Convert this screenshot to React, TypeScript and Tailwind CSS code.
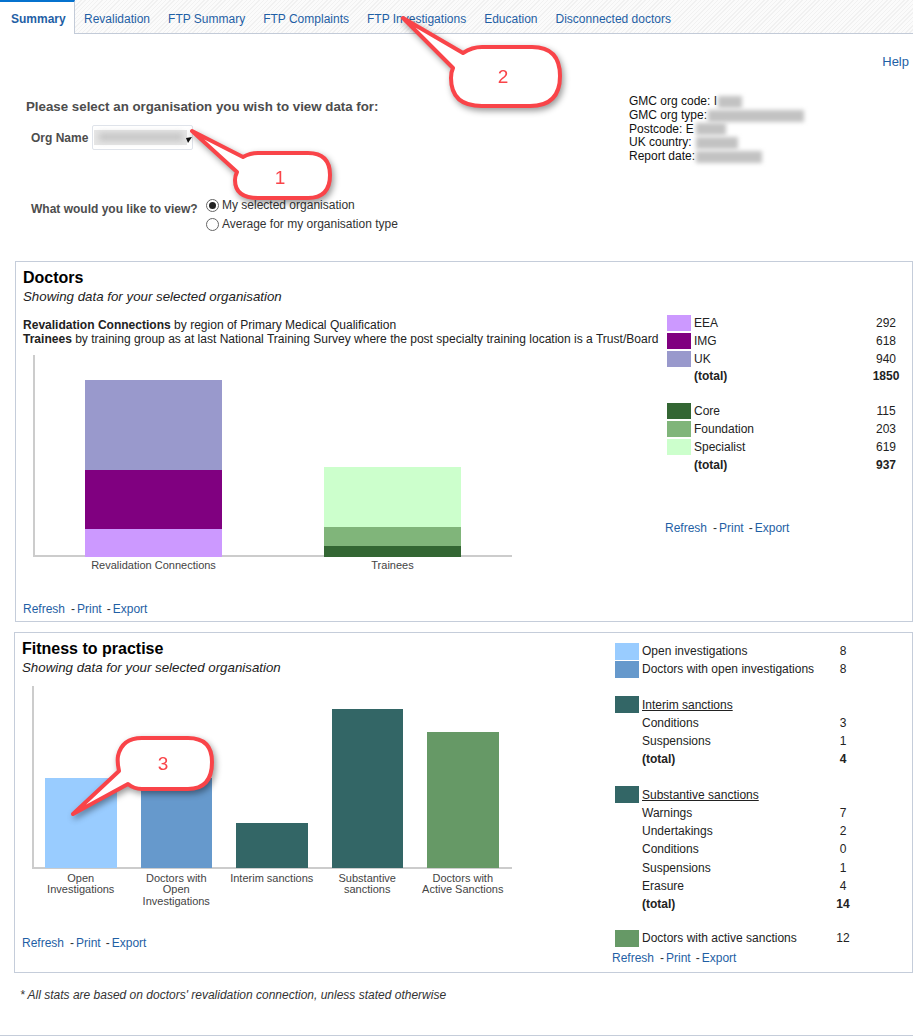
const tabs = [
  "Revalidation",
  "FTP Summary",
  "FTP Complaints",
  "FTP Investigations",
  "Education",
  "Disconnected doctors",
];

const orgInfo = [
  { label: "GMC org code: I", blur: "w-[24px]", gap: "ml-[1px]" },
  { label: "GMC org type:", blur: "w-[96px]", gap: "ml-[1px]" },
  { label: "Postcode: E", blur: "w-[30px]", gap: "ml-[2px]" },
  { label: "UK country:", blur: "w-[42px]", gap: "ml-[4px]" },
  { label: "Report date:", blur: "w-[66px]", gap: "ml-[1px]" },
];

const callouts = [
  {
    n: "1",
    x: 280,
    y: 184,
    d: "M192,131 L243,157 Q250,153 258,153 L308,153 Q330,153 330,175 Q330,198 308,198 L258,198 Q235,198 235,180 Q235,176 237,172 Z",
  },
  {
    n: "2",
    x: 503,
    y: 83,
    d: "M403,18 L463,53 Q472,47 482,47 L532,47 Q560,47 560,76 Q560,106 530,106 L482,106 Q451,106 451,78 Q451,72 453,68 Z",
  },
  {
    n: "3",
    x: 163,
    y: 770,
    d: "M73,814 L119,771 Q117,762 118,756 Q122,738 142,738 L188,738 Q212,738 212,762 Q212,789 188,789 L142,789 Q134,789 128,784 Z",
  },
];

function Links() {
  return (
    <div className="flex text-[12px] leading-[15px] text-[#1f5fa5]">
      <span>Refresh</span>
      <span className="ml-[6px] mr-[2px] text-[#333]">-</span>
      <span>Print</span>
      <span className="ml-[5px] mr-[2px] text-[#333]">-</span>
      <span>Export</span>
    </div>
  );
}

function DoctorRow({ color, label, value, total }: { color?: string; label: string; value: string; total?: boolean }) {
  return (
    <div className={`flex items-center ${total ? "h-[16px] font-bold" : "h-[18px]"}`}>
      <div className={`w-[24px] h-[16px] mr-[3px] ${color || ""}`} />
      <div className="w-[176px]">{label}</div>
      <div className="w-[32px] text-center">{value}</div>
    </div>
  );
}

function FtpRow({ color, label, value, total, heading }: { color?: string; label: string; value?: string; total?: boolean; heading?: boolean }) {
  return (
    <div className={`flex items-center h-[18.25px] ${total ? "font-bold" : ""}`}>
      <div className={`w-[24px] h-[17px] mr-[3px] ${color || ""}`} />
      <div className={`w-[186px] ${heading ? "underline" : ""}`}>{label}</div>
      <div className="w-[30px] text-center">{value}</div>
    </div>
  );
}

export default function App() {
  return (
    <div className="relative w-[913px] h-[1036px] overflow-hidden bg-white font-['Liberation_Sans',Arial,sans-serif] text-[12px] text-[#222]">
      {/* Tabs */}
      <div className="flex h-[34px] border-b border-[#c3cbd8] bg-[repeating-linear-gradient(135deg,#f1f1f1_0,#f1f1f1_1px,#fbfbfb_1px,#fbfbfb_3px)]">
        <div className="w-[75px] h-[34px] bg-white border-t-2 border-t-[#0572ce] border-r border-r-[#c3cbd8] pl-[11px] pt-[10px] leading-[14px] font-bold text-[#1f5fa5]">
          Summary
        </div>
        <div className="flex">
          {tabs.map((t) => (
            <div key={t} className="px-[9px] pt-[12px] leading-[14px] text-[#1f5fa5]">
              {t}
            </div>
          ))}
        </div>
      </div>

      {/* Org selection */}
      <div className="flex h-[227px]">
        <div className="w-[629px] pt-[65px] pl-[26px] text-[#4d4d4d] font-bold">
          <div className="text-[13.3px] leading-[15px]">Please select an organisation you wish to view data for:</div>
          <div className="flex items-center h-[25px] mt-[11px] ml-[5px]">
            <div className="w-[61px]">Org Name</div>
            <div className="relative w-[101px] h-[25px] border border-[#dfe3ea] rounded-[2px] overflow-hidden">
              <div className="absolute left-[1px] top-[4px] w-[93px] h-[15px] bg-[#e6e6e6]" />
              <div className="absolute left-[6px] top-[7px] w-[84px] h-[8px] bg-[#c4c4c4] blur-[3px]" />
              <svg className="absolute left-[93px] top-[11px]" width="7" height="7" viewBox="0 0 7 7">
                <polygon points="0,1 6,0 2,6" fill="#111" />
              </svg>
            </div>
          </div>
          <div className="flex mt-[48px] ml-[5px]">
            <div className="w-[175px] pt-[4px] leading-[14px]">What would you like to view?</div>
            <div className="font-normal text-[#333]">
              <div className="flex items-center h-[14px]">
                <span className="flex items-center justify-center w-[13px] h-[13px] mr-[3px] rounded-full border border-[#666]">
                  <span className="w-[7px] h-[7px] rounded-full bg-[#222]" />
                </span>
                My selected organisation
              </div>
              <div className="flex items-center h-[14px] mt-[5px]">
                <span className="w-[13px] h-[13px] mr-[3px] rounded-full border border-[#666]" />
                Average for my organisation type
              </div>
            </div>
          </div>
        </div>
        <div className="flex-1 pt-[20px]">
          <div className="pr-[4px] text-right text-[13px] leading-[16px] text-[#1f5fa5]">Help</div>
          <div className="mt-[25px] leading-[13.75px] text-[#111]">
            {orgInfo.map((o) => (
              <div key={o.label} className="flex items-center h-[13.75px]">
                {o.label}
                <span className={`h-[12px] bg-[#c2c2c2] blur-[2px] ${o.blur} ${o.gap}`} />
              </div>
            ))}
          </div>
        </div>
      </div>

      {/* Doctors */}
      <div className="flex h-[361px] ml-[15px] border border-[#c5cdda]">
        <div className="w-[651px] shrink-0 pt-[6px] pl-[7px]">
          <div className="text-[16px] leading-[20px] font-bold text-black">Doctors</div>
          <div className="mt-[1px] text-[13.3px] leading-[16px] italic">Showing data for your selected organisation</div>
          <div className="mt-[13px] text-[12.04px] leading-[14px] whitespace-nowrap">
            <div><b>Revalidation Connections</b> by region of Primary Medical Qualification</div>
            <div><b>Trainees</b> by training group as at last National Training Survey where the post specialty training location is a Trust/Board</div>
          </div>
          <div className="ml-[10px] mt-[9px] w-[479px]">
            <div className="flex items-end h-[202px] pl-[50px] gap-[102px] border-l-2 border-b-2 border-[#ccc]">
              <div className="w-[137px] -mb-[2px]">
                <div className="h-[90px] bg-[#9999cc]" />
                <div className="h-[59px] bg-[#800080]" />
                <div className="h-[28px] bg-[#cc99ff]" />
              </div>
              <div className="w-[137px] -mb-[2px]">
                <div className="h-[60px] bg-[#ccffcc]" />
                <div className="h-[19px] bg-[#80b57a]" />
                <div className="h-[11px] bg-[#336633]" />
              </div>
            </div>
            <div className="flex mt-[2px] pl-[52px] gap-[102px] text-[11px] leading-[13px] text-[#444] text-center">
              <div className="w-[137px]">Revalidation Connections</div>
              <div className="w-[137px]">Trainees</div>
            </div>
          </div>
          <div className="mt-[30px]">
            <Links />
          </div>
        </div>
        <div className="pt-[52px]">
          <DoctorRow color="bg-[#cc99ff]" label="EEA" value="292" />
          <DoctorRow color="bg-[#800080]" label="IMG" value="618" />
          <DoctorRow color="bg-[#9999cc]" label="UK" value="940" />
          <DoctorRow label="(total)" value="1850" total />
          <div className="h-[18px]" />
          <DoctorRow color="bg-[#336633]" label="Core" value="115" />
          <DoctorRow color="bg-[#80b57a]" label="Foundation" value="203" />
          <DoctorRow color="bg-[#ccffcc]" label="Specialist" value="619" />
          <div className="mt-[1px]">
            <DoctorRow label="(total)" value="937" total />
          </div>
          <div className="mt-[48px] -ml-[2px]">
            <Links />
          </div>
        </div>
      </div>

      {/* Fitness to practise */}
      <div className="flex h-[341px] mt-[10px] ml-[14px] border border-[#c5cdda]">
        <div className="w-[600px] shrink-0 pt-[6px] pl-[7px]">
          <div className="text-[16px] leading-[20px] font-bold text-black">Fitness to practise</div>
          <div className="mt-[1px] text-[13.3px] leading-[16px] italic">Showing data for your selected organisation</div>
          <div className="ml-[10px] mt-[10px] w-[480px]">
            <div className="flex items-end h-[183px] pl-[11px] gap-[24px] border-l-2 border-b-2 border-[#ccc]">
              <div className="w-[72px] h-[90px] -mb-[1px] bg-[#99ccff]" />
              <div className="w-[71px] h-[90px] -mb-[1px] bg-[#6699cc]" />
              <div className="w-[72px] h-[45px] -mb-[1px] bg-[#336666]" />
              <div className="w-[71px] h-[159px] -mb-[1px] bg-[#336666]" />
              <div className="w-[72px] h-[136px] -mb-[1px] bg-[#669966]" />
            </div>
            <div className="flex h-[34px] mt-[4px] ml-[1px] text-[11px] leading-[11.3px] text-[#444] text-center">
              <div className="w-[95.5px]">Open<br />Investigations</div>
              <div className="w-[95.5px]">Doctors with<br />Open<br />Investigations</div>
              <div className="w-[95.5px]">Interim sanctions</div>
              <div className="w-[95.5px]">Substantive<br />sanctions</div>
              <div className="w-[95.5px] whitespace-nowrap">Doctors with<br />Active Sanctions</div>
            </div>
          </div>
          <div className="mt-[29px]">
            <Links />
          </div>
        </div>
        <div className="pt-[9px]">
          <FtpRow color="bg-[#99ccff]" label="Open investigations" value="8" />
          <FtpRow color="bg-[#6699cc]" label="Doctors with open investigations" value="8" />
          <div className="h-[17px]" />
          <FtpRow color="bg-[#336666]" label="Interim sanctions" heading />
          <FtpRow label="Conditions" value="3" />
          <FtpRow label="Suspensions" value="1" />
          <FtpRow label="(total)" value="4" total />
          <div className="h-[17px]" />
          <FtpRow color="bg-[#336666]" label="Substantive sanctions" heading />
          <FtpRow label="Warnings" value="7" />
          <FtpRow label="Undertakings" value="2" />
          <FtpRow label="Conditions" value="0" />
          <FtpRow label="Suspensions" value="1" />
          <FtpRow label="Erasure" value="4" />
          <FtpRow label="(total)" value="14" total />
          <div className="h-[16px]" />
          <FtpRow color="bg-[#669966]" label="Doctors with active sanctions" value="12" />
          <div className="mt-[3px] -ml-[3px]">
            <Links />
          </div>
        </div>
      </div>

      <div className="mt-[15px] pl-[20px] leading-[14px] italic text-[#333]">
        * All stats are based on doctors' revalidation connection, unless stated otherwise
      </div>
      <div className="mt-[33px] border-t border-[#c5cdda]" />

      {/* Annotation callouts */}
      <svg
        className="absolute left-0 top-0 pointer-events-none drop-shadow-[2px_3px_3px_rgba(0,0,0,0.4)]"
        width="913"
        height="1036"
      >
        {callouts.map((c) => (
          <g key={c.n}>
            <path d={c.d} fill="#fff" stroke="#f94449" strokeWidth="4" strokeLinejoin="round" />
            <text x={c.x} y={c.y} textAnchor="middle" fontSize="19" fill="#f94449">
              {c.n}
            </text>
          </g>
        ))}
      </svg>
    </div>
  );
}
